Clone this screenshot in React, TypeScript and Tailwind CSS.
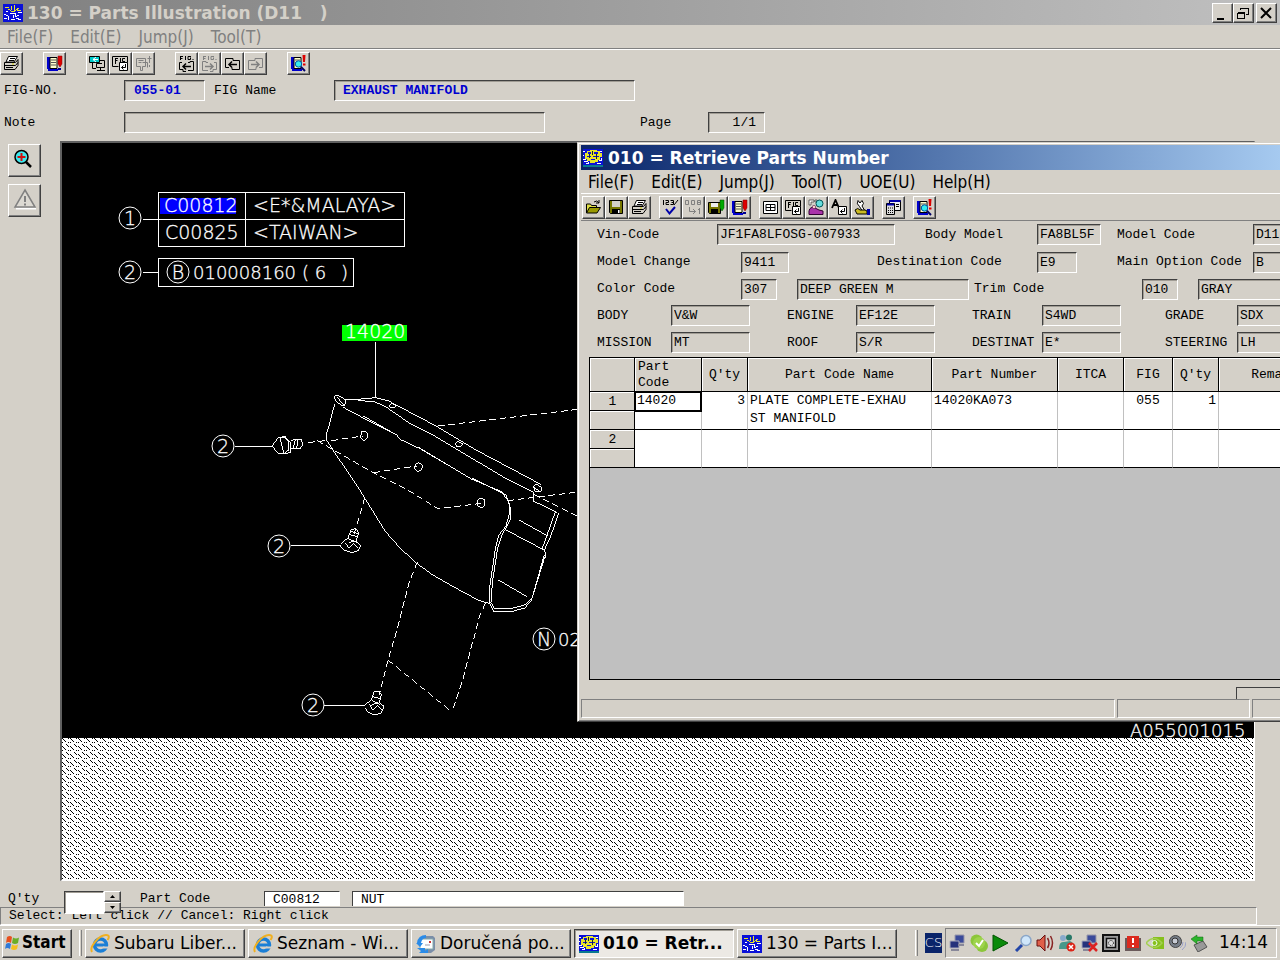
import React from 'react';

const MONO = "[font-family:'Liberation_Mono','DejaVu_Sans_Mono',monospace]";
const UI = "[font-family:'DejaVu_Sans_Condensed','DejaVu_Sans',sans-serif]";
const UI_WIDE = "[font-family:'DejaVu_Sans',sans-serif]";

const RAISED =
  'border border-t-white border-l-white border-r-[#404040] border-b-[#404040] shadow-[inset_-1px_-1px_0_#808080]';
const SUNKEN = 'border border-t-[#404040] border-l-[#404040] border-r-white border-b-white shadow-[inset_1px_1px_0_#a09c94]';

type IconName =
  | 'print' | 'bookRed' | 'swap' | 'figEnter' | 'jumpOff' | 'figBack' | 'figNext' | 'back' | 'next' | 'search'
  | 'open' | 'save' | 'check' | 'renumber' | 'saveGreen' | 'grid' | 'persons' | 'letter' | 'wrench' | 'calc';

function Icon({ name }: { name: IconName }) {
  const gray = '#808080';
  const figText = (color: string) => (
    <path d="M2.500 1v4M2 1.500h3M2 3.500h2.500M7.500 1v4M13 1.500h-3v3h2.500v-2M15 4v1" stroke={color} fill="none" />
  );
  const arrowBox = (color: string, flip: boolean) => (
    <g transform={flip ? 'translate(17 0) scale(-1 1)' : undefined} stroke={color} fill="none">
      <path d="M4 7.500H1.500v7H5v2h3M10 7.500h2v-1h3.500v9H10" />
      <path d="M4.500 11.500H13M8 8.500l-3 3 3 3" strokeWidth="1.500" />
    </g>
  );
  const plainArrow = (color: string, flip: boolean) => (
    <g transform={flip ? 'translate(17 0) scale(-1 1)' : undefined} stroke={color} fill="none">
      <path d="M5 12.500H1.500v-9H9v2h6.500v9H8v-2" />
      <path d="M4.500 9.500H13M8 6.500l-3 3 3 3" strokeWidth="1.500" />
    </g>
  );
  const book = (
    <g>
      <path d="M1 2h3v12H1z" fill="#00c" />
      <path d="M4 2.500h7v11H4z" fill="#ffc" stroke="#000" />
      <path d="M5 5h5M5 7.500h5M5 10h5" stroke="#555" />
      <path d="M2 15h10" stroke="#00c" strokeWidth="2" />
    </g>
  );
  const shapes: Record<IconName, React.ReactNode> = {
    print: (
      <g stroke="#000">
        <path d="M5.500 1.500h9L11 7H3z" fill="#fff" />
        <path d="M1.500 7.500h11l2.500-3v6l-3 4h-10.500z" fill="#d4d0c8" />
        <path d="M1.500 10.500h11l2.500-3M3 12.500h7M7 3.500h5M6 5.500h5" fill="none" />
        <path d="M9 9h2" stroke="#cc0" />
      </g>
    ),
    bookRed: (
      <g>
        {book}
        <path d="M12 1h4v8l-2 3-2-3z" fill="#d00" stroke="#800" strokeWidth=".5" />
        <path d="M12 13h3v2h-3z" fill="#008" />
      </g>
    ),
    swap: (
      <g stroke="#000" fill="none">
        <path d="M.5 1.500h10v6H.5z" fill="#0cc" />
        <path d="M7 2L4 4.500 7 7M4 4.500h5" stroke="#fff" />
        <path d="M3.500 8v5.500H7M10 5.500h5.500v7H7.500V8.500H13M8 15.500h8M11.500 12v3" />
      </g>
    ),
    figEnter: (
      <g stroke="#000" fill="none">
        <path d="M.5 1.500h15v6M.5 1.500v10h6M3.500 3v6M3.500 3.500h2.500M3.500 5.500h2M8.500 3v4M13 3.500h-2.500v3h2.500" />
        <path d="M7.500 7.500h8v8h-8z" fill="#fff" />
        <path d="M13.500 9v3.500h-4M11.500 10.500l-2 2 2 2" />
      </g>
    ),
    jumpOff: (
      <g stroke={gray} fill="none">
        <path d="M1.500 3.500h9v8h-3v4h-2v-4h-4zM3.500 5.500h5M3.500 7.500h3M7.500 7.500h5v5M14.500 1v7M12.500 3.500h4M14.500 10v2" />
      </g>
    ),
    figBack: <g>{figText('#000')}{arrowBox('#000', false)}</g>,
    figNext: <g>{figText(gray)}{arrowBox(gray, true)}</g>,
    back: plainArrow('#000', false),
    next: plainArrow(gray, true),
    search: (
      <g>
        {book}
        <circle cx="8.500" cy="9" r="3.200" fill="#3ee" stroke="#05a" />
        <path d="M11 12l4 4" stroke="#006" strokeWidth="2" />
        <path d="M12.500 0h3l-.5 7h-2zM13 8.500h2.500v2H13z" fill="#d00" />
      </g>
    ),
    open: (
      <g stroke="#000">
        <path d="M1.500 14V5h4l1 1.500h5V9" fill="#dd4" />
        <path d="M1.500 14l3-5.500h11l-3.500 5.500z" fill="#990" />
        <path d="M9 3q3-2.500 5 1M14 1v3h-3" fill="none" />
      </g>
    ),
    save: (
      <g>
        <path d="M1.500 1.500h13v13h-12l-1-1z" fill="#770" stroke="#000" />
        <path d="M4 2h8v6H4z" fill="#d4d0c8" />
        <path d="M4 10h8v4H4z" fill="#000" />
        <path d="M10 11h1.500v3H10z" fill="#fff" />
      </g>
    ),
    check: (
      <g fill="none">
        <path d="M1.500 1v5M3.500 1.500h3v2h-2.500v2H7M8.500 1.500h3v4h-3M9.500 3.500h2" stroke="#000" />
        <path d="M16 1l-4 5" stroke="#000" />
        <path d="M4 10l3.500 4.500L13 8" stroke="#00a" strokeWidth="2" />
      </g>
    ),
    renumber: (
      <g stroke={gray} fill="none">
        <path d="M.5 1.500h3v4h-3zM6.500 1.500h3v4h-3zM12.500 1.500h3v4h-3zM12.500 3.500h3M4.500 8v4.500h6M8 10l2.500 2.500L8 15M14.500 9v6M13 10.500h1" />
      </g>
    ),
    saveGreen: (
      <g>
        <path d="M.5 3.500h12v11H1.500l-1-1z" fill="#770" stroke="#000" />
        <path d="M3 4h7v4H3z" fill="#eee" />
        <path d="M3 10h7v4H3z" fill="#000" />
        <path d="M12 1h4v8l-2 3-2-3z" fill="#0a0" stroke="#040" strokeWidth=".5" />
      </g>
    ),
    grid: <path d="M1.500 2.500h14v12h-14zM4 5.500h9v6H4zM8.500 5v7M4 8.500h9" stroke="#000" fill="#fff" />,
    persons: (
      <g>
        <path d="M1 1h5v2H3v3H1zM7 1h2v2H7z" fill="#fff" stroke="#333" strokeWidth=".7" />
        <circle cx="11.500" cy="4.500" r="3.500" fill="#6dd" stroke="#055" />
        <path d="M1 12q1-5 6-3l4 2 4 1v3.500H1z" fill="#a3a" stroke="#303" />
        <circle cx="6" cy="8" r="1.700" fill="#fcc" stroke="#303" strokeWidth=".5" />
      </g>
    ),
    letter: (
      <g stroke="#000" fill="none">
        <path d="M1 9l3.500-8L8 9M2.500 6h4" strokeWidth="1.800" />
        <path d="M7.500 7.500h8v8h-8z" fill="#fff" />
        <path d="M13.500 9v3.500h-4M11.500 10.500l-2 2 2 2" />
      </g>
    ),
    wrench: (
      <g stroke="#000">
        <path d="M4 1.500L6 4l2-2.500q3 3 0 5.500l3 5-2 1-3.500-5.500Q2 5 4 1.500z" fill="#fff" />
        <path d="M1 11q3-3 5 0h5l2 1v3H3z" fill="#cb2" />
        <path d="M13 10h3v6h-3z" fill="#00a" stroke="none" />
      </g>
    ),
    calc: (
      <g stroke="#000">
        <path d="M4.500 1.500h11v10h-11z" fill="#eee" />
        <path d="M4.500 2h11" stroke="#00a" strokeWidth="2" />
        <path d="M1.500 4.500h8v11h-8z" fill="#ddd" />
        <path d="M2 5.500h7" stroke="#00a" strokeWidth="2" />
        <path d="M3 9h1M5 9h1M7 9h1M3 11.500h1M5 11.500h1M7 11.500h1M3 13.500h1M5 13.500h1M7 13.500h1M11 5.500h3M11 7.500h3" />
      </g>
    ),
  };
  return (
    <svg width="17" height="17" viewBox="0 0 17 17" strokeWidth="1" aria-hidden="true">
      {shapes[name]}
    </svg>
  );
}

function ToolButton({ name, label, disabled }: { name: IconName; label: string; disabled?: boolean }) {
  return (
    <button
      type="button"
      aria-label={label}
      disabled={disabled}
      className={`flex h-[23px] w-[23px] shrink-0 items-center justify-center bg-[#d4d0c8] ${RAISED}`}
    >
      <Icon name={name} />
    </button>
  );
}

type Tool = { name: IconName; label: string; disabled?: boolean };

function ToolGroup({ tools }: { tools: Tool[] }) {
  return (
    <div className="flex">
      {tools.map((t) => (
        <ToolButton key={t.label} {...t} />
      ))}
    </div>
  );
}

const mainTools: Tool[][] = [
  [{ name: 'print', label: 'Print' }],
  [{ name: 'bookRed', label: 'Catalogue notes' }],
  [
    { name: 'swap', label: 'Switch illustration' },
    { name: 'figEnter', label: 'Enter figure' },
    { name: 'jumpOff', label: 'Jump', disabled: true },
  ],
  [
    { name: 'figBack', label: 'Previous figure' },
    { name: 'figNext', label: 'Next figure', disabled: true },
    { name: 'back', label: 'Previous page' },
    { name: 'next', label: 'Next page', disabled: true },
  ],
  [{ name: 'search', label: 'Search notes' }],
];

const partTools: Tool[][] = [
  [
    { name: 'open', label: 'Open' },
    { name: 'save', label: 'Save' },
    { name: 'print', label: 'Print list' },
  ],
  [
    { name: 'check', label: 'Check numbers' },
    { name: 'renumber', label: 'Renumber', disabled: true },
    { name: 'saveGreen', label: 'Save order' },
    { name: 'bookRed', label: 'Catalogue' },
  ],
  [
    { name: 'grid', label: 'Table view' },
    { name: 'figEnter', label: 'Go to figure' },
    { name: 'persons', label: 'Illustration index' },
    { name: 'letter', label: 'Enter name' },
    { name: 'wrench', label: 'Settings' },
  ],
  [{ name: 'calc', label: 'Calculate' }],
  [{ name: 'search', label: 'Search parts' }],
];

function AppIcon({ yellow }: { yellow?: boolean }) {
  return (
    <svg width="20" height="18" viewBox="0 0 20 18" className="shrink-0" shapeRendering="crispEdges" aria-hidden="true">
      <path d="M0 0h20v18H0z" fill="#0a10d8" />
      {yellow ? (
        <g>
          <path d="M2 4h2V2h3V1h7v1h3v2h2v4h-2v3h-2v2h-3v1H7v-2H4v-2H2z" fill="#e6e62a" />
          <path d="M5 3h3v2H5zM11 3h4v2h-4zM4 7h4v1H4zM10 7h6v1h-6zM8 10h4v1H8z" fill="#0a10d8" />
          <path d="M9 2h1v4H9zM13 5h1v5h-1zM6 5h1v4H6z" fill="#123" />
          <path d="M0 2h2M0 6h1M0 10.500h3M1 12.500h4M3 14.500h3M14 14.500h4M16 11.500h3M17 2.500h2M5 13v2M18 9v2" stroke="#fff" />
          <path d="M0 16h20v2H0z" fill="#0a7a90" />
        </g>
      ) : (
        <g fill="none">
          <path d="M2 3h4M8 2v4M5 5l5 3 6-4M11 1v6M14 6h4" stroke="#e6e62a" />
          <path d="M1 10l4 2 1 4M7 9h5v4l4-2M13 14l5 2M3 7h2M8 15h4M15 8l4 1M1 14h3M10 11v3" stroke="#fff" />
        </g>
      )}
    </svg>
  );
}

function Menu({ items, className }: { items: string[]; className: string }) {
  return (
    <nav className={`flex ${className}`}>
      {items.map((m) => (
        <button key={m} type="button" className="whitespace-nowrap">
          {m}
        </button>
      ))}
    </nav>
  );
}

type FieldProps = { id: string; value: string; label?: string; className: string };

function Field({ id, value, label, className }: FieldProps) {
  return (
    <input
      id={id}
      readOnly
      aria-label={label}
      defaultValue={value}
      className={`block h-[21px] shrink-0 truncate bg-transparent outline-none ${SUNKEN} ${className}`}
    />
  );
}

function Label({ htmlFor, className, children }: { htmlFor: string; className: string; children: string }) {
  return (
    <label htmlFor={htmlFor} className={`shrink-0 whitespace-pre ${className}`}>
      {children}
    </label>
  );
}

function Balloon({ x, y, children, r = 11 }: { x: number; y: number; children: string; r?: number }) {
  return (
    <g>
      <circle cx={x} cy={y} r={r} />
      <text x={x} y={y + 7} textAnchor="middle" fill="#fff" strokeWidth=".3">
        {children}
      </text>
    </g>
  );
}

function Drawing() {
  return (
    <svg
      className="block h-[595px] w-full bg-black font-extralight [font-family:'DejaVu_Sans','Liberation_Mono',sans-serif]"
      fontSize="19"
      role="img"
      aria-label="Exhaust manifold parts illustration"
    >
      <g transform="translate(-62 -143)" fill="none" stroke="#fff" strokeWidth="1">
        <g shapeRendering="crispEdges">
          <path d="M158.500 192.500h246v54h-246zM158.500 219.500h246M245.500 192.500v54M143 219.500h15" />
          <path d="M158.500 258.500h195v28h-195zM143 272.500h15" />
          <path d="M375.500 342v56" />
          <path d="M160 198h76v16h-76z" fill="#00f" stroke="none" />
          <path d="M342 325h65v16h-65z" fill="#0f0" stroke="none" />
        </g>
        <g fill="#fff" strokeWidth=".3">
          <text x="164" y="212">C00812</text>
          <text x="165" y="239">C00825</text>
          <text x="253" y="212">&lt;E*&amp;MALAYA&gt;</text>
          <text x="253" y="239">&lt;TAIWAN&gt;</text>
          <text x="193" y="279" fontSize="18">010008160</text>
          <text x="302" y="279" fontSize="18">( 6</text>
          <text x="341" y="279" fontSize="18">)</text>
          <text x="345" y="338">14020</text>
          <text x="558" y="646" fontSize="18">02</text>
          <text x="1130" y="737" fontSize="18">A055001015</text>
        </g>
        <Balloon x={130} y={218}>1</Balloon>
        <Balloon x={130} y={272}>2</Balloon>
        <Balloon x={178} y={272}>B</Balloon>
        <Balloon x={223} y={446}>2</Balloon>
        <Balloon x={279} y={546}>2</Balloon>
        <Balloon x={313} y={705}>2</Balloon>
        <Balloon x={544} y={639}>N</Balloon>
        <g transform="translate(200 380) scale(.33333)" strokeWidth="3" shapeRendering="crispEdges">
          <path d="M104 199h112M272 498h152M372 976h124" />
          <path d="M402 50l10-5 16 8 10 10-4 14-12-2-14-12zM412 52l20 24" />
          <path d="M404 72l-16 62-8 26v20l28 44 60 88 26 42 62 100 44 50 50 46 50 36 78 44 60 32 28 8" />
          <path d="M436 58h36l54-5 40 10 140 74 120 72 170 90 26 14" />
          <path d="M474 61l52 5 34 16 66 46 70 35 120 72 104 62 80 40v26l72 35" />
          <path d="M430 82l60 32 100 50 10 14 60 28 92 54 60 36 90 38 16 12 10 30v26l-10 36-22 28-10 40-16 110-2 52 14 28 56-2 36-10 20-22 40-130" />
          <path d="M490 108l102 58M656 202l100 60M815 294l92 46 18 22 8 30-2 26-26 50-12 36-16 104-4 60 10 18h50l44-12 20-22 36-128" />
          <path d="M1076 400l-12 36-16 42-14 30 4 26M1066 396l-40 112M957 420l86 48M918 450l114 60M895 600l86 50" />
          <path d="M1000 320l10-8 16 12-4 12h-16zM1002 322l14 10M568 76l8-5 12 5-4 8h-12zM766 192l8-8 14 8-8 8h-10z" />
          <path d="M484 156l10-3 8 8v14l-10 8-10-10zM646 254l10-7 12 10-4 12-12 6-8-9zM834 360l8-6 12 5v18l-8 7-12-6z" />
          <g strokeDasharray="20 11">
            <path d="M324 188l50-6M394 182l94-14M352 182l168 96 100 50 94 58 130-16M520 278l130-20" />
            <path d="M714 138l420-50M922 362l212-26M1002 344l132 66" />
            <path d="M494 354l-14 50-18 60M652 546l-24 60-40 154-24 80-26 104M856 670l-18 40-50 190-32 96M564 840l192 156" />
          </g>
          <path d="M216 198l18-24h20l18 14v28l-16 6h-20zM240 174l14-6 12 14v28l-14 12zM272 182l14-4h18l4 16-8 12h-28M286 180l-6 24M294 180l-4 24" />
          <path d="M424 490l20-16 10-26 14-2 8 12-8 24 14 14-8 16-20 6-26-10-6-10M444 476l24 10M450 464l22 6M454 454l20 8M436 488l10 16 14-14 14 14M446 490q20-12 26 0" />
          <path d="M496 974l18-14 8-24 14-3 8 12-6 22 14 12-8 20-20 6-22-10-6-10M516 962l20 8M520 950l20 6M508 972l10 18 14-14 14 14M514 976q18-12 26 0" />
        </g>
      </g>
    </svg>
  );
}

const hatchDots = [
  [0, 0], [1, 1], [2, 2], [3, 3], [6, 0], [0, 4], [4, 6], [5, 7], [6, 4],
];

function Hatch() {
  return (
    <svg className="block min-h-[80px] w-full grow basis-0" shapeRendering="crispEdges" aria-hidden="true">
      <defs>
        <pattern id="hatch" width="8" height="8" patternUnits="userSpaceOnUse">
          <rect width="8" height="8" fill="#fff" />
          {hatchDots.map(([x, y]) => (
            <rect key={`${x}-${y}`} x={x} y={y} width="1" height="1" fill="#000" />
          ))}
        </pattern>
      </defs>
      <rect width="100%" height="100%" fill="url(#hatch)" />
    </svg>
  );
}

const columns = [
  { title: 'Part Code', width: 'w-[67px]', align: 'text-left' },
  { title: "Q'ty", width: 'w-[46px]', align: 'text-center' },
  { title: 'Part Code Name', width: 'w-[184px]', align: 'text-center' },
  { title: 'Part Number', width: 'w-[126px]', align: 'text-center' },
  { title: 'ITCA', width: 'w-[66px]', align: 'text-center' },
  { title: 'FIG', width: 'w-[49px]', align: 'text-center' },
  { title: "Q'ty", width: 'w-[46px]', align: 'text-center' },
  { title: 'Remarks', width: 'w-[120px]', align: 'text-center' },
];

function RowHead({ n }: { n: number }) {
  return (
    <th scope="row" className="h-[38px] border-r border-b border-black bg-[#d4d0c8] p-0 font-normal">
      <div className="h-[18px] border-t border-l border-white leading-[18px]">{n}</div>
      <div className="h-[19px] border-t border-black">
        <div className="h-full border-t border-l border-white" />
      </div>
    </th>
  );
}

function PartsTable() {
  const cell = 'border-r border-b border-r-[#c0c0c0] border-b-black px-[2px] py-0 align-top leading-[18px]';
  return (
    <table className="w-[749px] table-fixed border-separate border-spacing-0 bg-white">
      <thead>
        <tr className="h-[34px] bg-[#d4d0c8]">
          <th aria-label="Row" className="w-[45px] border-r border-b border-black p-0 shadow-[inset_1px_1px_0_#fff]" />
          {columns.map((c, i) => (
            <th
              key={i}
              scope="col"
              className={`border-r border-b border-black px-[3px] py-0 leading-4 font-normal shadow-[inset_1px_1px_0_#fff] ${c.width} ${c.align}`}
            >
              {c.title}
            </th>
          ))}
        </tr>
      </thead>
      <tbody>
        <tr>
          <RowHead n={1} />
          <td className={`${cell} !px-0`}>
            <div className="h-[19px] pl-[2px] outline-2 -outline-offset-1 outline-black">14020</div>
          </td>
          <td className={`${cell} text-right`}>3</td>
          <td className={`${cell} whitespace-pre`}>{'PLATE COMPLETE-EXHAU\nST MANIFOLD'}</td>
          <td className={cell}>14020KA073</td>
          <td className={cell} />
          <td className={`${cell} text-center`}>055</td>
          <td className={`${cell} text-right`}>1</td>
          <td className={cell} />
        </tr>
        <tr>
          <RowHead n={2} />
          {columns.map((_, i) => (
            <td key={i} className={cell} />
          ))}
        </tr>
      </tbody>
    </table>
  );
}

function RetrieveWindow() {
  return (
    <section className="absolute top-[142px] right-0 left-[577px] flex h-[580px] flex-col overflow-hidden border-t border-b border-l border-t-[#d4d0c8] border-b-[#404040] border-l-[#d4d0c8] bg-[#d4d0c8] pl-[3px] shadow-[inset_1px_1px_0_#fff,inset_0_-1px_0_#808080]">
      <header className="mt-[2px] flex h-[25px] shrink-0 items-center gap-[5px] bg-linear-to-r from-[#0a246a] to-[#a6caf0] pl-[2px] text-white">
        <AppIcon yellow />
        <h2 className={`text-[17px] leading-6 font-bold whitespace-pre ${UI_WIDE}`}>010 = Retrieve Parts Number</h2>
      </header>
      <Menu
        items={['File(F)', 'Edit(E)', 'Jump(J)', 'Tool(T)', 'UOE(U)', 'Help(H)']}
        className={`h-[24px] shrink-0 gap-[17px] border-b border-white pl-[7px] text-[17px] font-extralight text-black ${UI}`}
      />
      <div className="flex h-[27px] shrink-0 items-center gap-2 border-b border-[#808080] pl-px">
        {partTools.map((g, i) => (
          <ToolGroup key={i} tools={g} />
        ))}
      </div>

      <div className={`flex shrink-0 flex-col pl-4 text-[13px] leading-4 ${MONO}`}>
        <div className="flex h-[27px] items-center">
          <Label htmlFor="vin" className="w-[120px]">Vin-Code</Label>
          <Field id="vin" value="JF1FA8LFOSG-007933" className="w-[178px] pl-[2px]" />
          <Label htmlFor="body-model" className="ml-[30px] w-[112px]">Body Model</Label>
          <Field id="body-model" value="FA8BL5F" className="w-[64px] pl-[2px]" />
          <Label htmlFor="model-code" className="ml-4 w-[136px]">Model Code</Label>
          <Field id="model-code" value="D11" className="w-[60px] pl-[2px]" />
        </div>
        <div className="flex h-[28px] items-center">
          <Label htmlFor="change" className="w-[144px]">Model Change</Label>
          <Field id="change" value="9411" className="w-[48px] pl-[2px]" />
          <Label htmlFor="destination" className="ml-[88px] w-[160px]">Destination Code</Label>
          <Field id="destination" value="E9" className="w-[40px] pl-[2px]" />
          <Label htmlFor="main-option" className="ml-[40px] w-[136px]">Main Option Code</Label>
          <Field id="main-option" value="B" className="w-[60px] pl-[2px]" />
        </div>
        <div className="flex h-[26px] items-center">
          <Label htmlFor="color" className="w-[144px]">Color Code</Label>
          <Field id="color" value="307" className="w-[36px] pl-[2px]" />
          <Field id="color-name" label="Color name" value="DEEP GREEN M" className="ml-5 w-[172px] pl-[2px]" />
          <Label htmlFor="trim" className="ml-[5px] w-[168px]">Trim Code</Label>
          <Field id="trim" value="010" className="w-[36px] pl-[2px]" />
          <Field id="trim-name" label="Trim name" value="GRAY" className="ml-5 w-[120px] pl-[2px]" />
        </div>
        {[
          [['BODY', 'V&W'], ['ENGINE', 'EF12E'], ['TRAIN', 'S4WD'], ['GRADE', 'SDX']],
          [['MISSION', 'MT'], ['ROOF', 'S/R'], ['DESTINAT', 'E*'], ['STEERING', 'LH']],
        ].map((row, i) => (
          <div key={i} className="flex h-[27px] items-center">
            {row.map(([label, value], j) => (
              <React.Fragment key={label}>
                <Label
                  htmlFor={`spec-${label}`}
                  className={['w-[74px]', 'ml-[37px] w-[69px]', 'ml-[37px] w-[70px]', 'ml-[44px] w-[72px]'][j]}
                >
                  {label}
                </Label>
                <Field id={`spec-${label}`} value={value} className="w-[79px] pl-[2px]" />
              </React.Fragment>
            ))}
          </div>
        ))}
      </div>

      <div
        className={`ml-[8px] mt-px grow overflow-hidden border-t border-b border-l border-black bg-[#c0c0c0] text-[13px] ${MONO}`}
      >
        <PartsTable />
      </div>
      <div className="flex h-[19px] shrink-0 items-end justify-end">
        <div className="h-[12px] w-[44px] border-t border-l border-[#404040]" />
      </div>
      <footer className="mb-[3px] flex h-[19px] shrink-0 gap-[2px]">
        <div className="grow border border-[#808080] border-r-white border-b-white" />
        <div className="w-[133px] border border-[#808080] border-r-white border-b-white" />
        <div className="w-[28px] border border-r-0 border-[#808080] border-b-white" />
      </footer>
    </section>
  );
}

function IeIcon() {
  return (
    <svg width="20" height="20" viewBox="0 0 20 20" fill="none" className="shrink-0" aria-hidden="true">
      <circle cx="10.500" cy="11" r="6" stroke="#1b7fd6" strokeWidth="3.500" />
      <path d="M5 11h12" stroke="#1b7fd6" strokeWidth="3" />
      <path d="M13 13.500h6" stroke="#d4d0c8" strokeWidth="2" />
      <path d="M2 18C-1 13 9 1 16 1c4 0 3 3 1.500 5" stroke="#f0b020" strokeWidth="2" />
    </svg>
  );
}

function MailIcon() {
  return (
    <svg width="20" height="20" viewBox="0 0 20 20" fill="none" className="shrink-0" aria-hidden="true">
      <path d="M6 2h11l2 2v12l-4 3H6z" fill="#7b8ea8" />
      <path d="M4 5h13v10H4z" fill="#fff" stroke="#8aa" />
      <path d="M1 9q1-8 9-8v3q-4 0-5 5h2l-3 4-4-4zM1 14h8v3l3-2v4H3l2-2z" fill="#2a8be8" />
      <path d="M13 7h2v2h-2z" fill="#c33" />
      <path d="M9 11h5" stroke="#99a" />
    </svg>
  );
}

function StartFlag() {
  return (
    <svg width="17" height="16" viewBox="0 0 17 16" className="shrink-0" aria-hidden="true">
      <path d="M3 2q3-2 5 0L7 8Q4 6 2 8z" fill="#e8501e" />
      <path d="M9 2.500q3 2 6 0L14 8q-3 2-6 0z" fill="#6aae28" />
      <path d="M2 9q3-2 5 0l-1 5q-3-2-5 0z" fill="#2f7ad8" />
      <path d="M8 9.500q3 2 6 0L13 14q-3 2-6 0z" fill="#f4c020" />
    </svg>
  );
}

function TrayIcons() {
  const monitors = (
    <g>
      <path d="M7 1h9v8H7z" fill="#3a4a9a" stroke="#99a" />
      <path d="M2 7h9v7H2z" fill="#26327c" stroke="#aab" />
      <path d="M3 16h8M10 11h6" stroke="#889" strokeWidth="2" />
    </g>
  );
  const icons: [string, React.ReactNode][] = [
    ['Network', monitors],
    ['Messenger', (
      <g>
        <circle cx="6.500" cy="6.500" r="6" fill="#8cc63a" />
        <circle cx="12" cy="12" r="6" fill="#8cc63a" />
        <circle cx="9" cy="9" r="6" fill="#9ed44c" />
        <path d="M6 9l3 3 4-6" stroke="#fff" strokeWidth="2" fill="none" />
      </g>
    )],
    ['Player', <path d="M1 1l15 8-15 8z" fill="#0a8a0a" stroke="#050" />],
    ['Magnifier', (
      <g>
        <path d="M8 11l-6 6" stroke="#2346a8" strokeWidth="3" />
        <circle cx="12" cy="6.500" r="5" fill="#cfe6fa" stroke="#8aa6c8" strokeWidth="1.500" />
      </g>
    )],
    ['Sound', (
      <g fill="none">
        <path d="M1 6h3l5-5v16l-5-5H1z" fill="#e0604a" stroke="#611" />
        <path d="M11.500 4q3 5 0 10M14.500 2q4 7 0 14" stroke="#822" strokeWidth="1.500" />
      </g>
    )],
    ['Contacts', (
      <g>
        <circle cx="5" cy="4" r="3" fill="#8ac" />
        <circle cx="11" cy="3.500" r="3" fill="#287868" />
        <path d="M1 15q0-8 5-7l6-1q4 1 4 8z" fill="#48988a" />
        <circle cx="13" cy="13" r="4.500" fill="#dc2418" />
        <path d="M11 11l4 4M15 11l-4 4" stroke="#fff" strokeWidth="1.500" />
      </g>
    )],
    ['Disconnected', (
      <g>
        {monitors}
        <path d="M9 9l8 8M17 9l-8 8" stroke="#d22" strokeWidth="2.500" />
      </g>
    )],
    ['Display', (
      <g fill="none" stroke="#111">
        <path d="M1 1h16v16H1z" fill="#9a9a9a" strokeWidth="2" />
        <path d="M4.500 4.500h9v9h-9z" fill="#ddd" strokeWidth="1.500" />
        <circle cx="9" cy="9" r="2.500" strokeDasharray="1 1" />
      </g>
    )],
    ['Alert', (
      <g>
        <path d="M1 4h16v13H1z" fill="#6a5a5a" />
        <path d="M3 2h12v12H3z" fill="#dc2a1e" />
        <path d="M9 4v5M9 11v2" stroke="#fff" strokeWidth="2" />
      </g>
    )],
    ['Graphics', (
      <g fill="none">
        <path d="M7 3h11v12H7z" fill="#86c01c" />
        <path d="M0 9q8-9 16 0-8 9-16 0z" stroke="#a4d050" strokeWidth="1.500" />
        <circle cx="8.500" cy="9" r="2.500" fill="#86c01c" stroke="#efe" />
      </g>
    )],
    ['Volume', (
      <g fill="none">
        <circle cx="7.500" cy="7.500" r="6" fill="#777e88" stroke="#444" />
        <circle cx="7" cy="7" r="3" fill="#c8ccd4" stroke="#333" />
        <path d="M12 14q3-2 3-6M14 16q4-3 4-8" stroke="#99a0c8" />
      </g>
    )],
    ['Eject', (
      <g>
        <path d="M4 11l9-4 4 6-9 5z" fill="#999" stroke="#555" />
        <path d="M1 5l6-4v2h6v4H7v3z" fill="#2cb42c" stroke="#161" strokeWidth=".5" />
      </g>
    )],
  ];
  return (
    <div className="flex items-center gap-1">
      {icons.map(([label, shape]) => (
        <svg key={label} width="18" height="18" viewBox="0 0 18 18" role="img" aria-label={label}>
          {shape}
        </svg>
      ))}
    </div>
  );
}

const tasks = [
  { title: 'Subaru Liber...', icon: <IeIcon />, active: false },
  { title: 'Seznam - Wi...', icon: <IeIcon />, active: false },
  { title: 'Doručená po...', icon: <MailIcon />, active: false },
  { title: '010 = Retr...', icon: <AppIcon yellow />, active: true },
  { title: '130 = Parts I...', icon: <AppIcon />, active: false },
];

function Divider() {
  return <div className="h-[26px] w-[3px] shrink-0 border-r border-l border-r-[#808080] border-l-white" />;
}

function Taskbar() {
  return (
    <footer className={`flex h-[35px] shrink-0 items-center border-t border-white pr-[3px] pl-[2px] text-[17px] text-black ${UI_WIDE}`}>
      <button
        type="button"
        className={`flex h-[29px] w-[70px] shrink-0 items-center gap-px pl-px text-[17px] font-bold ${UI} ${RAISED}`}
      >
        <StartFlag />
        Start
      </button>
      <div className="ml-[7px]"><Divider /></div>
      <div className="ml-[3px] flex gap-[3px]">
        {tasks.map((t) => (
          <button
            key={t.title}
            type="button"
            className={`flex h-[29px] w-[160px] shrink-0 items-center gap-1 pt-[2px] pl-[4px] whitespace-nowrap ${
              t.active ? `bg-[#ece9e4] font-bold ${SUNKEN}` : RAISED
            }`}
          >
            {t.icon}
            {t.title}
          </button>
        ))}
      </div>
      <div className="ml-auto"><Divider /></div>
      <span className="ml-[7px] flex h-[20px] w-[17px] items-center justify-center bg-[#0a246a] text-[13px] font-extralight text-white">
        CS
      </span>
      <div className="ml-[3px] flex h-[30px] items-center gap-[11px] border border-t-[#808080] border-l-[#808080] border-r-white border-b-white pr-[8px] pl-[2px]">
        <TrayIcons />
        <time className="w-[49px]">14:14</time>
      </div>
    </footer>
  );
}

export default function App() {
  return (
    <div className="relative flex min-h-screen flex-col overflow-hidden bg-[#d4d0c8]">
      <header className="flex h-[25px] items-center gap-1 bg-linear-to-r from-[#808080] to-[#c0c0c0] pr-[3px] pl-[3px]">
        <AppIcon />
        <h1 className={`text-[17px] leading-6 font-bold whitespace-pre text-[#d4d0c8] ${UI_WIDE}`}>{'130 = Parts Illustration (D11   )'}</h1>
        <div className="ml-auto flex">
          <button type="button" aria-label="Minimize" className={`h-[20px] w-[21px] bg-[#d4d0c8] ${RAISED}`}>
            <svg width="17" height="16" shapeRendering="crispEdges"><path d="M4 13h7v2H4z" /></svg>
          </button>
          <button type="button" aria-label="Restore" className={`h-[20px] w-[21px] bg-[#d4d0c8] ${RAISED}`}>
            <svg width="17" height="16" shapeRendering="crispEdges" fill="none" stroke="#000">
              <path d="M6 4.500V3h8v6h-2.500M6 3.500h8M3.500 8v5.500h7V7h-7M3 8.500h8" />
            </svg>
          </button>
          <button type="button" aria-label="Close" className={`ml-[2px] h-[20px] w-[21px] bg-[#d4d0c8] ${RAISED}`}>
            <svg width="17" height="16" stroke="#000" strokeWidth="2"><path d="M4 3l10 10M14 3L4 13" /></svg>
          </button>
        </div>
      </header>
      <Menu
        items={['File(F)', 'Edit(E)', 'Jump(J)', 'Tool(T)']}
        className={`h-[24px] gap-[17px] border-b border-[#808080] pl-[7px] text-[17px] font-extralight text-[#808080] ${UI}`}
      />
      <div className="flex h-[28px] items-center gap-5 border-t border-white">
        {mainTools.map((g, i) => (
          <ToolGroup key={i} tools={g} />
        ))}
      </div>

      <div className={`flex flex-col gap-[11px] pt-[3px] pl-1 text-[13px] leading-4 ${MONO}`}>
        <div className="flex items-center">
          <Label htmlFor="fig-no" className="w-[120px]">FIG-NO.</Label>
          <Field id="fig-no" value="055-01" className="w-[81px] pl-[9px] font-bold text-[#0000d0]" />
          <Label htmlFor="fig-name" className="ml-[9px] w-[120px]">FIG Name</Label>
          <Field id="fig-name" value="EXHAUST MANIFOLD" className="w-[301px] pl-[8px] font-bold text-[#0000d0]" />
        </div>
        <div className="flex items-center">
          <Label htmlFor="note" className="w-[120px]">Note</Label>
          <Field id="note" value="" className="w-[421px]" />
          <Label htmlFor="page" className="ml-[95px] w-[68px]">Page</Label>
          <Field id="page" value="1/1" className="w-[57px] pr-[8px] text-right" />
        </div>
      </div>

      <main className="mt-2 flex grow pr-[25px]">
        <aside className="flex w-[60px] shrink-0 flex-col gap-[7px] pt-[3px] pl-2">
          <button type="button" aria-label="Zoom in" className={`flex h-[33px] w-[33px] items-center justify-center pr-[3px] pb-[3px] ${RAISED}`}>
            <svg width="20" height="20" viewBox="0 0 20 20" aria-hidden="true">
              <path d="M12 12l6 6" stroke="#000" strokeWidth="2.500" />
              <circle cx="8.500" cy="8" r="6.500" fill="#3ee8ee" stroke="#000" strokeWidth="1.500" />
              <path d="M8.500 4v8M4.500 8h8" stroke="#d01010" strokeWidth="2" />
            </svg>
          </button>
          <button type="button" disabled aria-label="Warning" className={`flex h-[33px] w-[33px] items-center justify-center pb-[3px] ${RAISED}`}>
            <svg width="24" height="22" viewBox="0 0 24 22" aria-hidden="true">
              <path d="M3 20.500h20" stroke="#fff" strokeWidth="2" />
              <path d="M12 2l10 17H2z" fill="#dcd9d2" stroke="#808080" strokeWidth="1.500" />
              <path d="M12 8v6M12 15.500v2" stroke="#808080" strokeWidth="2" />
            </svg>
          </button>
        </aside>
        <div className="flex min-w-0 grow flex-col border-t-2 border-r border-b border-l-2 border-t-[#606060] border-r-white border-b-white border-l-[#606060]">
          <Drawing />
          <Hatch />
        </div>
      </main>

      <div className={`relative flex h-[26px] items-start pt-[10px] pl-2 text-[13px] leading-4 ${MONO}`}>
        <Label htmlFor="qty" className="w-[56px]">{"Q'ty"}</Label>
        <input id="qty" readOnly className={`z-10 h-[23px] w-[40px] shrink-0 bg-white outline-none ${SUNKEN}`} />
        <div className="z-10 flex shrink-0 flex-col">
          {['Increase', 'Decrease'].map((l, i) => (
            <button key={l} type="button" aria-label={l} className={`flex h-[11px] w-[17px] items-center justify-center bg-[#d4d0c8] ${RAISED}`}>
              <svg width="5" height="3" aria-hidden="true"><path d={i ? 'M0 0h5L2.500 3z' : 'M0 3h5L2.500 0z'} /></svg>
            </button>
          ))}
        </div>
        <Label htmlFor="part-code" className="ml-[19px] w-[124px]">Part Code</Label>
        <input id="part-code" readOnly defaultValue="C00812" className="h-[15px] w-[76px] shrink-0 border border-b-0 border-[#404040] border-r-white bg-white pt-[2px] pl-[8px] outline-none" />
        <input aria-label="Part name" readOnly defaultValue="NUT" className="ml-3 h-[15px] w-[332px] shrink-0 border border-b-0 border-[#404040] border-r-white bg-white pt-[2px] pl-[8px] outline-none" />
      </div>
      <div className={`mr-[23px] flex h-[18px] items-center border border-[#808080] border-r-white border-b-white pl-2 text-[13px] leading-4 whitespace-pre ${MONO}`}>
        Select: Left click // Cancel: Right click
      </div>
      <Taskbar />
      <RetrieveWindow />
    </div>
  );
}
